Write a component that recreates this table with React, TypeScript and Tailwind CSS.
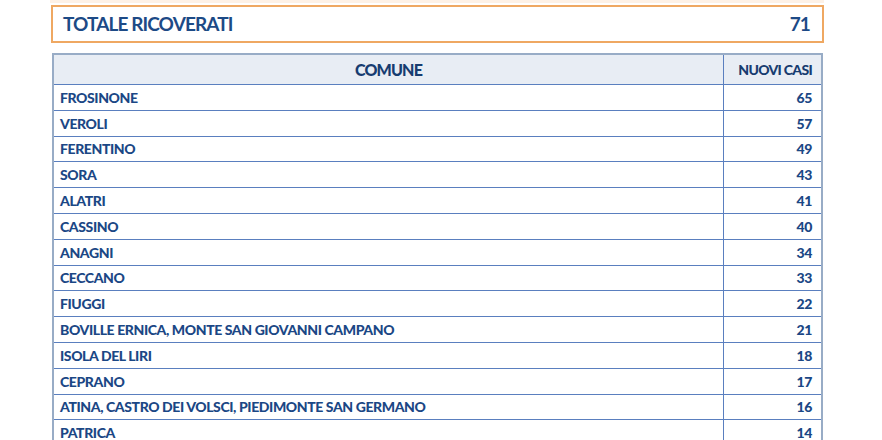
import React from "react";

const rows: [string, number][] = [
  ["FROSINONE", 65],
  ["VEROLI", 57],
  ["FERENTINO", 49],
  ["SORA", 43],
  ["ALATRI", 41],
  ["CASSINO", 40],
  ["ANAGNI", 34],
  ["CECCANO", 33],
  ["FIUGGI", 22],
  ["BOVILLE ERNICA, MONTE SAN GIOVANNI CAMPANO", 21],
  ["ISOLA DEL LIRI", 18],
  ["CEPRANO", 17],
  ["ATINA, CASTRO DEI VOLSCI, PIEDIMONTE SAN GERMANO", 16],
  ["PATRICA", 14],
];

export default function App() {
  return (
    <div
      className="w-[882px] h-[440px] overflow-hidden bg-white"
      style={{ fontFamily: "Lato, 'Open Sans', sans-serif" }}
    >
      <div className="h-[3px] ml-[50px] mr-[58px] bg-[#fdf1e6]" />
      <div className="mt-[2px] ml-[51px] w-[773px] h-[38px] border-2 border-[#efa862] flex items-center justify-between pl-[10px] pr-[12px] text-[#1d4a86] font-bold text-[19px] tracking-[-0.9px]">
        <span>TOTALE RICOVERATI</span>
        <span>71</span>
      </div>
      <div className="mt-[10px] ml-[52px] w-[771px] border-2 border-b-0 border-[#98acc6] text-[#1b4785] font-black text-[14px] tracking-[-0.4px]">
        <div className="flex h-[30px] bg-[#e8edf4] border-b border-[#5a7fbf]">
          <div className="flex-1 flex items-center justify-center text-[16px] text-[#173c70] tracking-[-0.8px] border-r border-[#5a7fbf]">
            COMUNE
          </div>
          <div className="w-[97px] flex items-center justify-end pr-[9px] text-[14px] text-[#173c70] tracking-[-0.7px]">
            NUOVI CASI
          </div>
        </div>
        {rows.map(([name, n]) => (
          <div key={name} className="flex h-[25.8px] border-b border-[#5a7fbf]">
            <div className="flex-1 flex items-center pl-[6px] border-r border-[#5a7fbf]">
              {name}
            </div>
            <div className="w-[97px] flex items-center justify-end pr-[9px]">{n}</div>
          </div>
        ))}
      </div>
    </div>
  );
}
